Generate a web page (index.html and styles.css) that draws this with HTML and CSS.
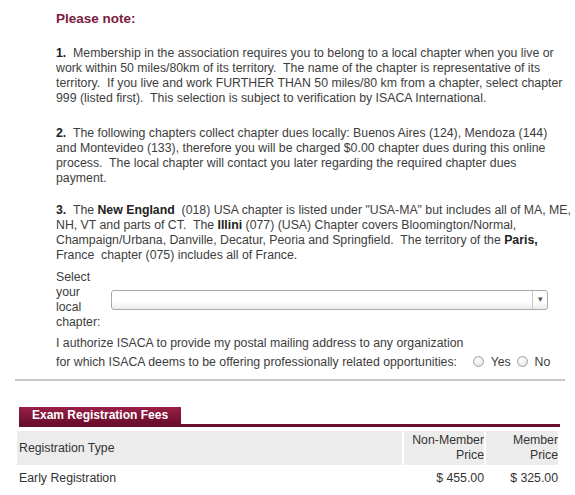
FILE: index.html
```html
<!DOCTYPE html>
<html lang="en">
<head>
  <meta charset="UTF-8">
  <title>Membership - Local Chapter</title>
  <link rel="stylesheet" href="styles.css">
</head>
<body>

  <div class="notes">
    <h3 class="note-title">Please note:</h3>

    <p class="first"><b>1.</b>&nbsp; Membership in the association requires you to belong to a local chapter when you live or<br>
    work within 50 miles/80km of its territory.&nbsp; The name of the chapter is representative of its<br>
    territory.&nbsp; If you live and work FURTHER THAN 50 miles/80 km from a chapter, select chapter<br>
    999 (listed first).&nbsp; This selection is subject to verification by ISACA International.</p>

    <p class="second"><b>2.</b>&nbsp; The following chapters collect chapter dues locally: Buenos Aires (124), Mendoza (144)<br>
    and Montevideo (133), therefore you will be charged $0.00 chapter dues during this online<br>
    process.&nbsp; The local chapter will contact you later regarding the required chapter dues<br>
    payment.</p>

    <p><b>3.</b>&nbsp; The <b>New England</b>&nbsp; (018) USA chapter is listed under "USA-MA" but includes all of MA, ME,<br>
    NH, VT and parts of CT.&nbsp; The <b>Illini</b> (077) (USA) Chapter covers Bloomington/Normal,<br>
    Champaign/Urbana, Danville, Decatur, Peoria and Springfield.&nbsp; The territory of the <b>Paris,</b><br>
    France&nbsp; chapter (075) includes all of France.</p>

    <div class="chapter-row">
      <label class="chapter-label">Select your local chapter:</label>
      <div class="select">
        <span class="select-value"></span>
        <span class="select-arrow">&#9662;</span>
      </div>
    </div>

    <p class="authorize">
      I authorize ISACA to provide my postal mailing address to any organization<br>
      for which ISACA deems to be offering professionally related opportunities:
      <span class="options">
        <label><input type="radio" name="mailing"> Yes</label>
        <label><input type="radio" name="mailing"> No</label>
      </span>
    </p>
  </div>

  <hr class="divider">

  <div class="fees">
    <div class="fees-tab"><span>Exam Registration Fees</span></div>
    <table class="fees-table">
      <tr class="head">
        <th class="type">Registration Type</th>
        <th class="price">Non-Member<br>Price</th>
        <th class="price member">Member<br>Price</th>
      </tr>
      <tr>
        <td class="type">Early Registration</td>
        <td class="price">$ 455.00</td>
        <td class="price member">$ 325.00</td>
      </tr>
    </table>
  </div>

</body>
</html>
```

FILE: styles.css
```css
body {
  margin: 0;
  font-family: "Liberation Sans", Arial, sans-serif;
  font-size: 12.3px;
  line-height: 15px;
  color: #3d3d3d;
  background: white;
}

b {
  color: #222;
}

.notes {
  width: 515px;
  padding: 11px 0 0 56px;
  white-space: nowrap;
}

.note-title {
  margin: 0 0 20px 0;
  font-size: 13.5px;
  line-height: 15px;
  color: #7b1b3e;
}

.notes p {
  margin: 0 0 19px 0;
}

.notes p.first {
  margin-bottom: 20px;
}

.notes p.second {
  margin-bottom: 17px;
}

.chapter-row {
  display: flex;
  align-items: center;
  margin-top: -12px;
  white-space: normal;
}

.chapter-label {
  width: 50px;
}

.select {
  display: flex;
  width: 435px;
  height: 18px;
  margin: -1px 0 0 5px;
  border: 1px solid #a9a9a9;
  border-radius: 3px;
  background: linear-gradient(#fff 60%, #ececec);
}

.select-value {
  flex: 1;
}

.select-arrow {
  width: 14px;
  border-left: 1px solid #c8c8c8;
  font-size: 9px;
  line-height: 16px;
  text-align: center;
  color: #555;
}

.notes p.authorize {
  margin: 4px 0 0 0;
  line-height: 19px;
}

.options {
  margin-left: 13px;
}

.options label {
  margin-right: 3px;
}

.options input {
  appearance: none;
  width: 11px;
  height: 11px;
  margin: 0 3px 0 0;
  vertical-align: -1px;
  border: 1px solid #a0a0a0;
  border-radius: 50%;
  background: radial-gradient(circle at 40% 35%, #fff, #dcdcdc);
}

.divider {
  width: 550px;
  margin: 7px 0 0 15px;
  border: none;
  border-top: 2px solid #c8c8c8;
}

.fees {
  width: 543px;
  margin: 26px 0 0 17px;
}

.fees-tab {
  margin-left: 2px;
  border-bottom: 3px solid #6a0e2d;
}

.fees-tab span {
  display: inline-block;
  padding: 1px 13px 1px 13px;
  font-size: 12px;
  font-weight: bold;
  color: white;
  background: linear-gradient(#9a1f47, #6a0e2d);
}

.fees-table {
  border-collapse: separate;
  border-spacing: 2px 4px;
  margin: 0 0 0 -2px;
  width: calc(100% + 2px);
}

.fees-table th,
.fees-table td {
  padding: 2px 1px 2px 2px;
  font-weight: normal;
  text-align: left;
  color: #333;
}

.fees-table .head th {
  background: #ececec;
}

.fees-table .price {
  width: 78px;
  text-align: right;
  padding-right: 0;
}

.fees-table .member {
  width: 70px;
}

.fees-table td {
  padding-top: 2px;
}
```
